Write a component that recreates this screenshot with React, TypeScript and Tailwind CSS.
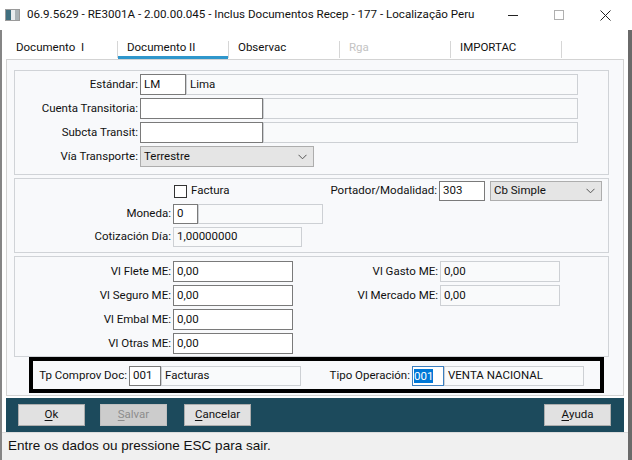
import React from "react";

type FieldProps = {
  w: number;
  value?: string;
  active?: boolean;
};

// Campo de texto: "active" = editável (borda escura), senão desabilitado
function Field({ w, value = "", active = false }: FieldProps) {
  return (
    <div
      className={`h-full flex items-center pl-[3px] text-[11.5px] text-[#111] overflow-hidden whitespace-nowrap border ${
        active ? "bg-white border-[#7a7a7a]" : "bg-[#f9fafb] border-[#cdd0d4]"
      }`}
      style={{ width: w }}
    >
      {value}
    </div>
  );
}

function Select({ w, value }: { w: number; value: string }) {
  return (
    <div
      className="h-full flex items-center justify-between pl-[3px] pr-[6px] text-[11.5px] text-[#111] bg-[#e5e5e5] border border-[#adadad]"
      style={{ width: w }}
    >
      <span>{value}</span>
      <svg width="9" height="6" viewBox="0 0 9 6" fill="none">
        <path d="M0.5 0.8 L4.5 4.8 L8.5 0.8" stroke="#555" strokeWidth="1" />
      </svg>
    </div>
  );
}

function Label({ w, text }: { w: number; text: string }) {
  return (
    <div className="h-full flex items-center justify-end pr-[2px] text-[11.5px] text-[#111] whitespace-nowrap" style={{ width: w }}>
      {text}
    </div>
  );
}

function Btn({ label, disabled = false, w = 67 }: { label: string; disabled?: boolean; w?: number }) {
  return (
    <div
      className={`h-[22px] flex items-center justify-center text-[11.5px] border ${
        disabled ? "bg-[#cccccc] border-[#bfbfbf] text-[#8c8c8c]" : "bg-[#e1e1e1] border-[#adadad] text-[#111]"
      }`}
      style={{ width: w }}
    >
      <span className="underline underline-offset-2">{label[0]}</span>
      <span>{label.slice(1)}</span>
    </div>
  );
}

const TABS = [
  { label: "Documento  I", active: false, disabled: false },
  { label: "Documento II", active: true, disabled: false },
  { label: "Observac", active: false, disabled: false },
  { label: "Rga", active: false, disabled: true },
  { label: "IMPORTAC", active: false, disabled: false },
];

export default function App() {
  return (
    <div className="w-[632px] h-[460px] bg-white flex flex-col overflow-hidden font-['Roboto',sans-serif]">
      {/* Barra de título */}
      <div className="h-[30px] flex items-center shrink-0">
        <div className="ml-[5px] w-[15px] h-[12px] border border-[#9a9a9a] flex">
          <div className="w-[5px] h-full bg-[#3f6f7f]" />
          <div className="w-[4px] h-full bg-[#e8ecee]" />
          <div className="flex-1 h-full bg-[#a9b2b6]" />
        </div>
        <span className="ml-[7px] text-[11.6px] text-[#111] whitespace-nowrap">
          06.9.5629 - RE3001A - 2.00.00.045 - Inclus Documentos Recep - 177 - Localização Peru
        </span>
        <div className="ml-auto flex h-full">
          <div className="w-[46px] flex items-center justify-center">
            <div className="w-[10px] h-[1px] bg-[#222]" />
          </div>
          <div className="w-[46px] flex items-center justify-center">
            <div className="w-[10px] h-[10px] border border-[#b0b0b0]" />
          </div>
          <div className="w-[46px] flex items-center justify-center">
            <svg width="11" height="11" viewBox="0 0 11 11">
              <path d="M0.5 0.5 L10.5 10.5 M10.5 0.5 L0.5 10.5" stroke="#222" strokeWidth="1" />
            </svg>
          </div>
          <div className="w-[4px]" />
        </div>
      </div>

      <div className="flex-1 flex">
        <div className="w-[628px] flex flex-col border-l-[2px] border-[#858585]">
          {/* Abas */}
          <div className="h-[29px] flex pl-[5px] shrink-0">
            {TABS.map((t) => (
              <React.Fragment key={t.label}>
                <div className="w-[110px] flex flex-col">
                  <div
                    className={`flex-1 flex items-center pl-[9px] pt-[9px] text-[11.5px] whitespace-pre ${
                      t.disabled ? "text-[#c3c3c3]" : "text-[#111]"
                    }`}
                  >
                    {t.label}
                  </div>
                  <div className={`h-[3px] ${t.active ? "bg-[#2f97cc]" : ""}`} />
                </div>
                <div className="w-[1px] h-[17px] self-end mb-[1px] bg-[#d6d6d6]" />
              </React.Fragment>
            ))}
          </div>

          {/* Página da aba */}
          <div className="ml-[4px] w-[618px] h-[337px] shrink-0 border border-[#d3d3d3] bg-[#f8f9fb] flex flex-col pl-[7px] pt-[10px]">
            {/* Quadro 1 */}
            <div className="w-[595px] h-[105px] border border-[#d0d3d7] flex flex-col gap-[3px] pt-[3px]">
              <div className="h-[21px] flex">
                <Label w={125} text="Estándar:" />
                <Field w={46} value="LM" active />
                <Field w={392} value="Lima" />
              </div>
              <div className="h-[21px] flex">
                <Label w={125} text="Cuenta Transitoria:" />
                <Field w={123} active />
                <Field w={315} />
              </div>
              <div className="h-[21px] flex">
                <Label w={125} text="Subcta Transit:" />
                <Field w={123} active />
                <Field w={315} />
              </div>
              <div className="h-[21px] flex">
                <Label w={125} text="Vía Transporte:" />
                <Select w={174} value="Terrestre" />
              </div>
            </div>

            {/* Quadro 2 */}
            <div className="mt-[3px] w-[595px] h-[75px] border border-[#d0d3d7] flex pt-[2px]">
              <div className="w-[315px] flex flex-col gap-[3px]">
                <div className="h-[20px] flex items-center pl-[159px] gap-[4px] text-[11.5px] text-[#111]">
                  <div className="w-[13px] h-[13px] border border-[#333] bg-white" />
                  <span>Factura</span>
                </div>
                <div className="h-[20px] flex">
                  <Label w={158} text="Moneda:" />
                  <Field w={25} value="0" active />
                  <Field w={125} />
                </div>
                <div className="h-[20px] flex">
                  <Label w={158} text="Cotización Día:" />
                  <Field w={129} value="1,00000000" />
                </div>
              </div>
              <div className="flex-1 flex flex-col">
                <div className="h-[20px] flex">
                  <Label w={109} text="Portador/Modalidad:" />
                  <Field w={46} value="303" active />
                  <div className="w-[5px]" />
                  <Select w={112} value="Cb Simple" />
                </div>
              </div>
            </div>

            {/* Quadro 3 */}
            <div className="mt-[3px] w-[595px] h-[101px] border border-[#d0d3d7] flex pt-[4px]">
              <div className="w-[315px] flex flex-col gap-[3px]">
                {["Vl Flete ME:", "Vl Seguro ME:", "Vl Embal ME:", "Vl Otras ME:"].map((l) => (
                  <div key={l} className="h-[21px] flex">
                    <Label w={158} text={l} />
                    <Field w={120} value="0,00" active />
                  </div>
                ))}
              </div>
              <div className="flex-1 flex flex-col gap-[3px]">
                {["Vl Gasto ME:", "Vl Mercado ME:"].map((l) => (
                  <div key={l} className="h-[21px] flex">
                    <Label w={110} text={l} />
                    <Field w={120} value="0,00" />
                  </div>
                ))}
              </div>
            </div>

            {/* Destaque */}
            <div className="ml-[15px] w-[575px] h-[36px] border-[4px] border-black flex pt-[5px]">
              <div className="w-[297px] h-[20px] flex">
                <Label w={96} text="Tp Comprov Doc:" />
                <Field w={32} value="001" active />
                <Field w={140} value="Facturas" />
              </div>
              <div className="h-[20px] flex">
                <Label w={82} text="Tipo Operación:" />
                <div className="w-[32px] h-full flex items-center pl-[1px] bg-white border border-[#3b7fc0] text-[11.5px]">
                  <span className="bg-[#0078d7] text-white leading-[14px]">001</span>
                </div>
                <Field w={140} value="VENTA NACIONAL" />
              </div>
            </div>
          </div>

          {/* Botões */}
          <div className="mt-[2px] ml-[4px] w-[618px] h-[34px] shrink-0 bg-[#1c4a5c] flex items-center pl-[12px] pr-[13px]">
            <Btn label="Ok" />
            <div className="w-[15px]" />
            <Btn label="Salvar" disabled />
            <div className="w-[17px]" />
            <Btn label="Cancelar" />
            <div className="ml-auto">
              <Btn label="Ayuda" />
            </div>
          </div>

          {/* Barra de status */}
          <div className="flex-1 bg-[#f0f0f0] border-t border-[#dcdcdc] flex items-center pl-[6px] text-[13.5px] text-[#111] font-['Liberation_Sans',sans-serif]">
            Entre os dados ou pressione ESC para sair.
          </div>
        </div>
        <div className="flex-1 bg-[#6a6a6a]" />
      </div>
    </div>
  );
}
